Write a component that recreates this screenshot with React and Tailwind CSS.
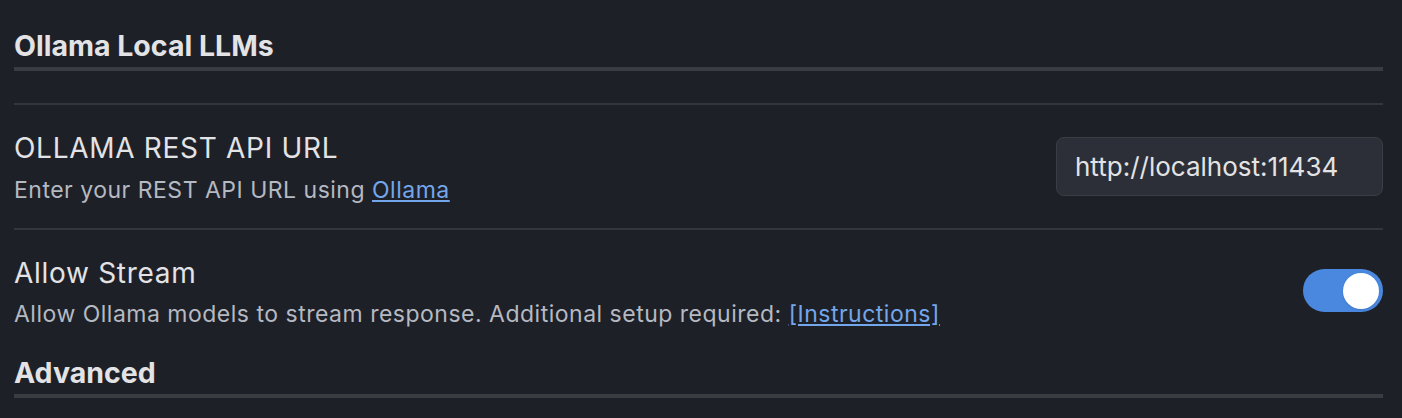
import React from "react";

const FONT = { fontFamily: "Inter, 'Noto Sans', 'Liberation Sans', sans-serif" };

function SectionHeading({ children, className = "" }) {
  return (
    <h2 className={`border-b-4 border-[#393c41] text-[28.5px] font-bold leading-8 text-[#e3e3e5] ${className}`}>
      {children}
    </h2>
  );
}

function Toggle({ on, onChange, className = "" }) {
  return (
    <button
      type="button"
      onClick={() => onChange(!on)}
      className={`flex h-[43px] w-[80px] shrink-0 items-center rounded-full px-[4px] ${
        on ? "justify-end bg-[#4a88e0]" : "justify-start bg-[#3a3d44]"
      } ${className}`}
    >
      <span className="h-[36px] w-[36px] rounded-full bg-white shadow" />
    </button>
  );
}

export default function App() {
  const [stream, setStream] = React.useState(true);
  const [url, setUrl] = React.useState("http://localhost:11434");

  return (
    <div className="min-h-screen bg-[#1e2028] pl-[14px] pr-[19px]" style={FONT}>
      <SectionHeading className="pt-[30px] pb-[5px]">Ollama Local LLMs</SectionHeading>

      <div className="h-[34px] border-b-2 border-[#33363b]" />

      <div className="flex items-start justify-between border-b-2 border-[#33363b] pt-[27px] pb-[24px]">
        <div>
          <div className="text-[28px] leading-8 tracking-[0.7px] text-[#e3e3e5]">OLLAMA REST API URL</div>
          <div className="mt-[12px] text-[23px] leading-7 tracking-[0.5px] text-[#b5b9c1]">
            Enter your REST API URL using{" "}
            <a href="#" className="text-[#73a6ea] underline underline-offset-2">
              Ollama
            </a>
          </div>
        </div>
        <input
          value={url}
          onChange={(e) => setUrl(e.target.value)}
          className="mt-[5px] h-[59px] w-[327px] rounded-lg border border-[#3a3d44] bg-[#2c2f37] px-[18px] text-[26px] text-[#e3e3e5] outline-none"
        />
      </div>

      <div className="flex items-start justify-between pt-[27px]">
        <div>
          <div className="text-[28px] leading-8 tracking-[0.7px] text-[#e3e3e5]">Allow Stream</div>
          <div className="mt-[11px] text-[23px] leading-7 tracking-[0.5px] text-[#b5b9c1]">
            Allow Ollama models to stream response. Additional setup required:{" "}
            <a href="#" className="text-[#73a6ea] underline underline-offset-2">
              [Instructions]
            </a>
          </div>
        </div>
        <Toggle on={stream} onChange={setStream} className="mt-[12px]" />
      </div>

      <SectionHeading className="mt-[29px] pb-[5px]">Advanced</SectionHeading>
    </div>
  );
}
